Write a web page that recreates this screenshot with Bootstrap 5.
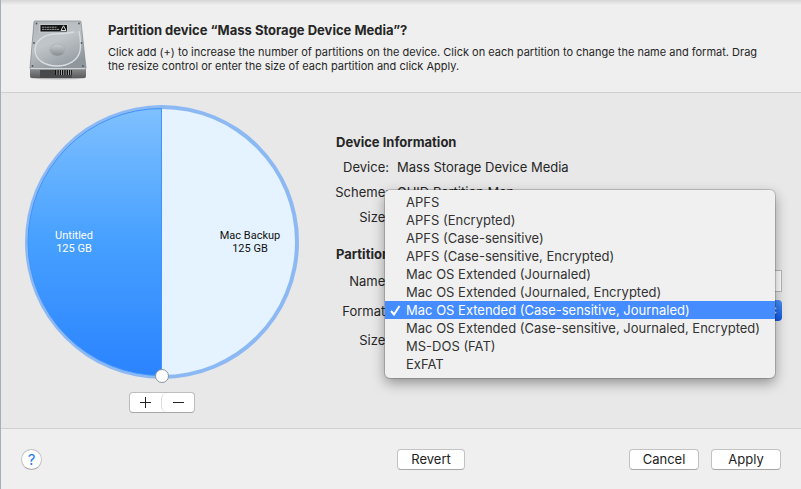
<!DOCTYPE html>
<html lang="en">
<head>
<meta charset="utf-8">
<meta name="viewport" content="width=device-width, initial-scale=1">
<title>Partition device</title>
<link href="https://cdn.jsdelivr.net/npm/bootstrap@5.3.0/dist/css/bootstrap.min.css" rel="stylesheet">
<style>
  body { font-family: Inter, "Liberation Sans", sans-serif; font-size: 13px; line-height: 18px; color: #262626; background: #e8e8e8; }
  .sheet { border-left: 1px solid #a9adb8; }
  .sheet-head { background: linear-gradient(#d6d6d6, #efefef 5px); border-bottom: 1px solid #cfcfcf; padding: 16px 32px 11px 26px; gap: 19px; }
  .sheet-head h1 { font-size: 13px; line-height: 18px; font-weight: 700; margin: 5px 0 6px; }
  .sheet-head p { font-size: 11px; line-height: 14px; }
  .sheet-main { padding: 12px 19px 14px 24px; gap: 37px; }
  .pie-side { width: 274px; }
  .pie-side text { font-family: Roboto, "Liberation Sans", sans-serif; font-size: 11px; text-anchor: middle; }
  .stepper { margin-top: 7px; border: 1px solid #bdbdbd; border-bottom-color: #a8a8a8; border-radius: 4px; background: #fff; }
  .stepper button { width: 33px; height: 19px; }
  .stepper button:first-child { width: 31px; }
  .stepper button + button { border-left: 1px solid #dcdcdc !important; }
  .info { padding-top: 28px; }
  .info h2 { font-size: 13px; line-height: 18px; font-weight: 700; margin: 0 0 7px; }
  .info dl, .info form { display: grid; grid-template-columns: 53px 1fr; column-gap: 8px; margin: 0; }
  .info dt, .info dd { font-weight: 400; line-height: 18px; margin: 0 0 7px; }
  .info dt, .info label { text-align: right; white-space: nowrap; justify-self: end; }
  .info form { row-gap: 8px; align-items: center; }
  .info dl { margin-bottom: 12px; }
  .field { height: 22px; border: 1px solid #b8b8b8; background: #fff; font-size: 13px; padding: 0 4px; border-radius: 0; }
  .picker { height: 21px; border: 0; border-radius: 4px; appearance: none; font-size: 13px; padding: 0 8px;
    background: url("data:image/svg+xml,%3Csvg xmlns='http://www.w3.org/2000/svg' width='16' height='21' fill='none' stroke='white' stroke-width='1.5'%3E%3Cpath d='M5 9l3-3 3 3M5 12l3 3 3-3'/%3E%3C/svg%3E") right 1px center no-repeat,
      linear-gradient(#4a93fb, #1257e0) right / 16px 100% no-repeat, #fff; }
  .formats { display: block; top: -110px; left: -12px; right: 7px; min-width: 0; padding: 3px 0 5px; font-size: 13px; background: #f0f0f0; border: 0; border-radius: 5px; box-shadow: 0 0 0 1px rgba(0,0,0,.16), 0 5px 13px rgba(0,0,0,.38); }
  .formats .dropdown-item { padding: 0 21px; line-height: 18px; color: #333; position: relative; }
  .formats .dropdown-item.active { color: #fff; background: #448cff; }
  .formats .tick { position: absolute; left: 5px; top: 4px; }
  .sheet-foot { background: #efefef; border-top: 1px solid #cfcfcf; padding: 20px 20px 19px; display: grid; grid-template-columns: 376px 1fr auto; align-items: center; }
  .foot-actions { gap: 12px; }
  .push { min-width: 70px; height: 21px; padding: 0; font-size: 13px; line-height: 19px; color: #222; background: #fff; border: 1px solid #c2c2c2; border-bottom-color: #a6a6a6; border-radius: 4px; }
  .push-revert { min-width: 68px; }
  .help { width: 21px; height: 21px; padding: 0; font-size: 15px; line-height: 19px; color: #1a7bff; background: #fff; border: 1px solid #c2c2c2; border-bottom-color: #a6a6a6; border-radius: 50%; }
</style>
</head>
<body>
<div class="sheet min-vh-100 d-flex flex-column">
  <header class="sheet-head d-flex">
    <svg width="62" height="65" viewBox="0 0 62 65" class="flex-shrink-0" aria-hidden="true">
      <defs>
        <linearGradient id="lid" x1="0" y1="0" x2=".5" y2="1"><stop offset="0" stop-color="#b2b7bb"/><stop offset=".5" stop-color="#bcc1c5"/><stop offset="1" stop-color="#8f979d"/></linearGradient>
        <linearGradient id="front" x1="0" y1="0" x2="0" y2="1"><stop offset="0" stop-color="#8d8f91"/><stop offset="1" stop-color="#595b5d"/></linearGradient>
        <linearGradient id="hub" x1="0" y1="0" x2="0" y2="1"><stop offset="0" stop-color="#c9ced1"/><stop offset="1" stop-color="#858c91"/></linearGradient>
      </defs>
      <ellipse cx="31" cy="61.500" rx="28" ry="2" fill="#000" opacity=".25"/>
      <path d="M3 52H59V60Q59 62 57 62H5Q3 62 3 60Z" fill="url(#front)"/>
      <path d="M13 54H45V62H13Z" fill="#48494a"/>
      <path d="M8 5H53Q54 5 54 6L59 52Q59 53 58 53H4Q3 53 3 52L7 6Q7 5 8 5Z" fill="url(#lid)" stroke="#81878b" stroke-width=".7"/>
      <path d="M3.500 52.700H58.500" stroke="#e2e5e7" stroke-width="1"/>
      <path d="M52 15C53 20 54 29 53 35C51 44 42 50 30 50C17 50 8 43 8 34C8 25 17 18 29 18C37 18 42 17 47 16" fill="#fff" fill-opacity=".08" stroke="#d9dee1" stroke-width="1.300"/>
      <ellipse cx="30.500" cy="34" rx="7.500" ry="6" fill="url(#hub)" stroke="#a2a8ac" stroke-width=".6"/>
      <rect x="12" y="8" width="29" height="8.500" fill="#d4d7d9" opacity=".5"/>
      <rect x="13.500" y="9" width="26.500" height="6.500" fill="#151617"/>
      <path d="M15 11.200H30M15 13.400H32" stroke="#aaa" stroke-width=".9" stroke-dasharray="2 .5"/>
      <path d="M36.500 9.800L39 14.500H34Z" fill="none" stroke="#eee" stroke-width=".9"/>
      <g fill="#4f565b"><circle cx="9.500" cy="7.500" r=".9"/><circle cx="52" cy="7.500" r=".9"/><circle cx="7" cy="27" r=".9"/><circle cx="54.500" cy="27" r=".9"/><circle cx="5.500" cy="50" r=".9"/><circle cx="56" cy="50" r=".9"/></g>
      <path d="M28 56.500H45" stroke="#c9c9c9" stroke-width="5"/>
      <path d="M28 56.500H45" stroke="#111" stroke-width="5" stroke-dasharray="1.500 .8"/>
    </svg>
    <div>
      <h1>Partition device “Mass Storage Device Media”?</h1>
      <p class="mb-0">Click add (+) to increase the number of partitions on the device. Click on each partition to change the name and format. Drag the resize control or enter the size of each partition and click Apply.</p>
    </div>
  </header>

  <main class="sheet-main d-flex flex-grow-1">
    <section class="pie-side flex-shrink-0 d-flex flex-column align-items-center">
      <svg width="274" height="280" viewBox="0 0 274 280" role="img" aria-label="Partition map">
        <defs>
          <linearGradient id="used" x1="0" y1="0" x2="0" y2="1"><stop offset="0" stop-color="#7fc0ff"/><stop offset=".5" stop-color="#46a0ff"/><stop offset="1" stop-color="#2b83ff"/></linearGradient>
        </defs>
        <circle cx="137" cy="137" r="137" fill="#8cb9f3"/>
        <circle cx="137" cy="137" r="133" fill="#e4f3ff"/>
        <path d="M136.500 3.500A133.500 133.500 0 0 0 136.500 270.500Z" fill="url(#used)" stroke="#3f93fb"/>
        <text x="49" y="134" fill="#fff">Untitled</text><text x="49" y="147" fill="#fff">125 GB</text>
        <text x="225" y="134" fill="#111">Mac Backup</text><text x="225" y="147" fill="#111">125 GB</text>
        <circle cx="137" cy="271" r="6.500" fill="#fff" stroke="#8c949c"/>
      </svg>
      <div class="stepper d-flex">
        <button type="button" class="btn p-0 border-0 d-flex align-items-center justify-content-center" aria-label="Add partition"><svg width="11" height="11" stroke="#222"><path d="M0 5.500H11M5.500 0V11"/></svg></button>
        <button type="button" class="btn p-0 border-0 d-flex align-items-center justify-content-center" aria-label="Remove partition"><svg width="11" height="11" stroke="#222"><path d="M0 5.500H11"/></svg></button>
      </div>
    </section>

    <section class="info flex-grow-1">
      <h2>Device Information</h2>
      <dl>
        <dt>Device:</dt><dd>Mass Storage Device Media</dd>
        <dt>Scheme:</dt><dd>GUID Partition Map</dd>
        <dt>Size:</dt><dd></dd>
      </dl>
      <h2>Partition Information</h2>
      <form>
        <label for="pname">Name:</label>
        <input id="pname" class="field form-control" type="text">
        <label for="pformat">Format:</label>
        <div class="position-relative">
          <select id="pformat" class="picker w-100"><option></option></select>
          <ul class="formats dropdown-menu show">
            <li><button type="button" class="dropdown-item">APFS</button></li>
            <li><button type="button" class="dropdown-item">APFS (Encrypted)</button></li>
            <li><button type="button" class="dropdown-item">APFS (Case-sensitive)</button></li>
            <li><button type="button" class="dropdown-item">APFS (Case-sensitive, Encrypted)</button></li>
            <li><button type="button" class="dropdown-item">Mac OS Extended (Journaled)</button></li>
            <li><button type="button" class="dropdown-item">Mac OS Extended (Journaled, Encrypted)</button></li>
            <li><button type="button" class="dropdown-item active"><svg class="tick" width="11" height="11" fill="none" stroke="#fff" stroke-width="2"><path d="M1 6L4 9.500L9.500 1"/></svg>Mac OS Extended (Case-sensitive, Journaled)</button></li>
            <li><button type="button" class="dropdown-item">Mac OS Extended (Case-sensitive, Journaled, Encrypted)</button></li>
            <li><button type="button" class="dropdown-item">MS-DOS (FAT)</button></li>
            <li><button type="button" class="dropdown-item">ExFAT</button></li>
          </ul>
        </div>
        <label for="psize">Size:</label>
        <input id="psize" class="field form-control w-25" type="text">
      </form>
    </section>
  </main>

  <footer class="sheet-foot">
    <div><button type="button" class="help btn" aria-label="Help">?</button></div>
    <div><button type="button" class="push push-revert btn">Revert</button></div>
    <div class="foot-actions d-flex"><button type="button" class="push btn">Cancel</button><button type="button" class="push btn">Apply</button></div>
  </footer>
</div>
<script src="https://cdn.jsdelivr.net/npm/bootstrap@5.3.0/dist/js/bootstrap.bundle.min.js"></script>
</body>
</html>
